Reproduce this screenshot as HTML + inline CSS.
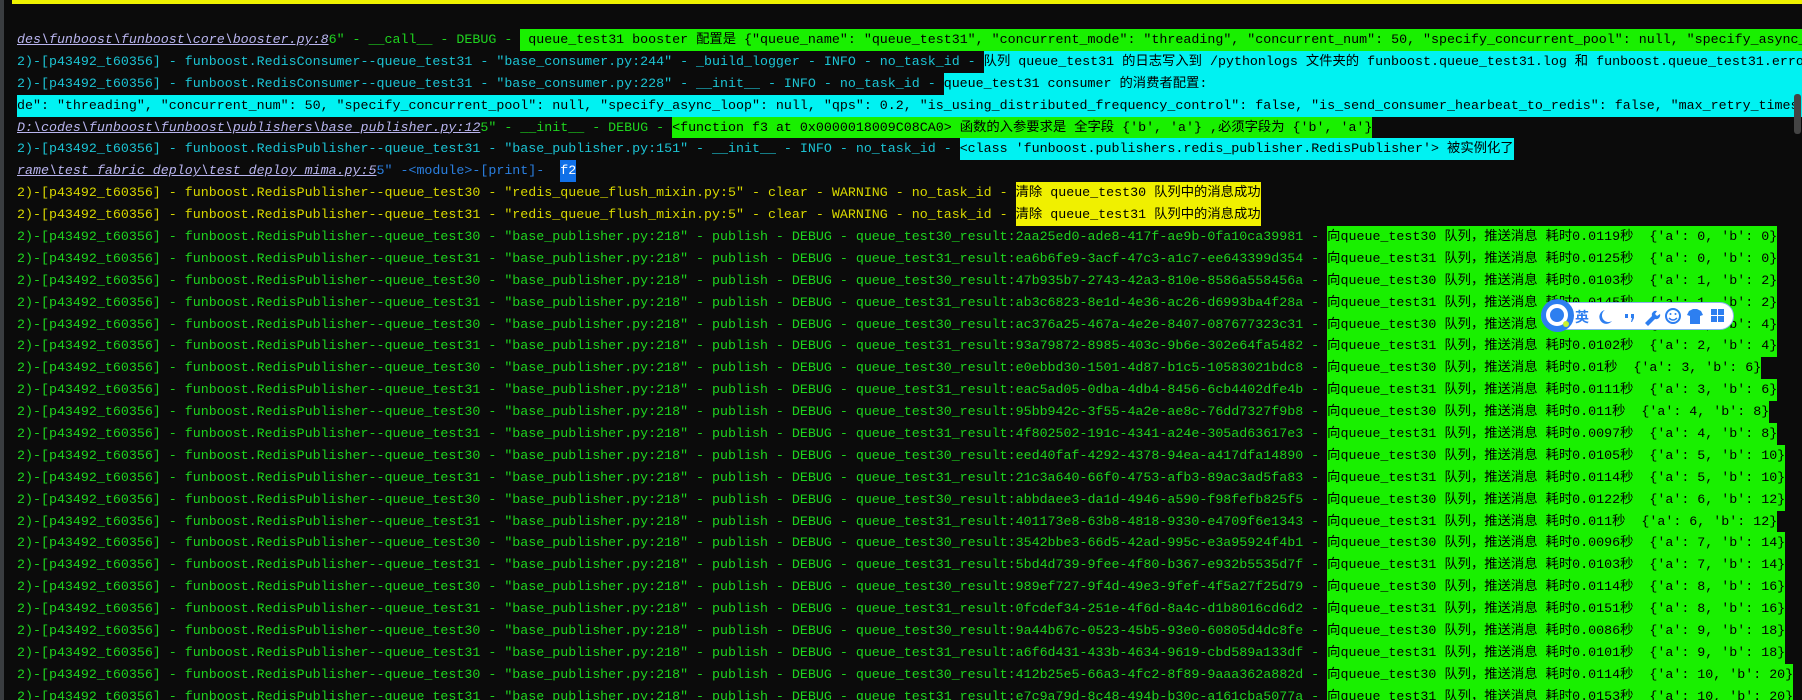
<!DOCTYPE html>
<html><head><meta charset="utf-8">
<style>
html,body{margin:0;padding:0;background:#0b0b0b;width:1802px;height:700px;overflow:hidden;position:relative}
.strip{position:absolute;left:0;top:0;width:4px;height:700px;background:#3a3d40}
.ybar{position:absolute;left:12px;top:0;width:1790px;height:4px;background:#eef200}
.log{position:absolute;left:17px;top:29px;font-family:"Liberation Mono","Noto Sans CJK SC",monospace;font-size:13.32px;line-height:21.9px}
.l{height:21.9px;white-space:pre;overflow:visible}
.l span{display:inline-block;height:21.9px;line-height:21.9px;vertical-align:top}
.g{color:#1fd41f}.c{color:#1cc4d4}.y{color:#d8d800}.b{color:#2a7fe0}
.p{color:#b8b4ee;text-decoration:underline;font-style:italic}
.gb{background:#19f000;color:#000}
.cb{background:#00f2f2;color:#000}
.yb{background:#f0f000;color:#000}
.bb{background:#1070e8;color:#fff}
.full{width:2000px}
.ime{position:absolute;left:1541px;top:302px;width:193px;height:28px;background:#fff;border:1px solid #8ab4ee;border-radius:15px;box-sizing:border-box}
.q{position:absolute;left:1541px;top:299px;width:33px;height:33px;border-radius:50%;background:#2d7ff0}
.sb{position:absolute;left:1794px;top:94px;width:7px;height:40px;background:#444;border-radius:3px}
</style></head><body>
<div class="strip"></div><div class="ybar"></div>
<div class="log"><div class="l"><span class="p">des\funboost\funboost\core\booster.py:8</span><span class="g">6" - __call__ - DEBUG - </span><span class="gb full"> queue_test31 booster 配置是 {"queue_name": "queue_test31", "concurrent_mode": "threading", "concurrent_num": 50, "specify_concurrent_pool": null, "specify_async_</span></div><div class="l"><span class="c">2)-[p43492_t60356] - funboost.RedisConsumer--queue_test31 - "base_consumer.py:244" - _build_logger - INFO - no_task_id - </span><span class="cb full">队列 queue_test31 的日志写入到 /pythonlogs 文件夹的 funboost.queue_test31.log 和 funboost.queue_test31.erro</span></div><div class="l"><span class="c">2)-[p43492_t60356] - funboost.RedisConsumer--queue_test31 - "base_consumer.py:228" - __init__ - INFO - no_task_id - </span><span class="cb full">queue_test31 consumer 的消费者配置:</span></div><div class="l"><span class="cb full">de": "threading", "concurrent_num": 50, "specify_concurrent_pool": null, "specify_async_loop": null, "qps": 0.2, "is_using_distributed_frequency_control": false, "is_send_consumer_hearbeat_to_redis": false, "max_retry_times</span></div><div class="l"><span class="p">D:\codes\funboost\funboost\publishers\base_publisher.py:12</span><span class="g">5" - __init__ - DEBUG - </span><span class="gb">&lt;function f3 at 0x0000018009C08CA0&gt; 函数的入参要求是 全字段 {'b', 'a'} ,必须字段为 {'b', 'a'}</span></div><div class="l"><span class="c">2)-[p43492_t60356] - funboost.RedisPublisher--queue_test31 - "base_publisher.py:151" - __init__ - INFO - no_task_id - </span><span class="cb">&lt;class 'funboost.publishers.redis_publisher.RedisPublisher'&gt; 被实例化了</span></div><div class="l"><span class="p">rame\test_fabric_deploy\test_deploy_mima.py:5</span><span class="b">5" -&lt;module&gt;-[print]-  </span><span class="bb">f2</span></div><div class="l"><span class="y">2)-[p43492_t60356] - funboost.RedisPublisher--queue_test30 - "redis_queue_flush_mixin.py:5" - clear - WARNING - no_task_id - </span><span class="yb">清除 queue_test30 队列中的消息成功</span></div><div class="l"><span class="y">2)-[p43492_t60356] - funboost.RedisPublisher--queue_test31 - "redis_queue_flush_mixin.py:5" - clear - WARNING - no_task_id - </span><span class="yb">清除 queue_test31 队列中的消息成功</span></div><div class="l"><span class="g">2)-[p43492_t60356] - funboost.RedisPublisher--queue_test30 - "base_publisher.py:218" - publish - DEBUG - queue_test30_result:2aa25ed0-ade8-417f-ae9b-0fa10ca39981 - </span><span class="gb">向queue_test30 队列，推送消息 耗时0.0119秒  {'a': 0, 'b': 0}</span></div><div class="l"><span class="g">2)-[p43492_t60356] - funboost.RedisPublisher--queue_test31 - "base_publisher.py:218" - publish - DEBUG - queue_test31_result:ea6b6fe9-3acf-47c3-a1c7-ee643399d354 - </span><span class="gb">向queue_test31 队列，推送消息 耗时0.0125秒  {'a': 0, 'b': 0}</span></div><div class="l"><span class="g">2)-[p43492_t60356] - funboost.RedisPublisher--queue_test30 - "base_publisher.py:218" - publish - DEBUG - queue_test30_result:47b935b7-2743-42a3-810e-8586a558456a - </span><span class="gb">向queue_test30 队列，推送消息 耗时0.0103秒  {'a': 1, 'b': 2}</span></div><div class="l"><span class="g">2)-[p43492_t60356] - funboost.RedisPublisher--queue_test31 - "base_publisher.py:218" - publish - DEBUG - queue_test31_result:ab3c6823-8e1d-4e36-ac26-d6993ba4f28a - </span><span class="gb">向queue_test31 队列，推送消息 耗时0.0145秒  {'a': 1, 'b': 2}</span></div><div class="l"><span class="g">2)-[p43492_t60356] - funboost.RedisPublisher--queue_test30 - "base_publisher.py:218" - publish - DEBUG - queue_test30_result:ac376a25-467a-4e2e-8407-087677323c31 - </span><span class="gb">向queue_test30 队列，推送消息 耗时0.0112秒  {'a': 2, 'b': 4}</span></div><div class="l"><span class="g">2)-[p43492_t60356] - funboost.RedisPublisher--queue_test31 - "base_publisher.py:218" - publish - DEBUG - queue_test31_result:93a79872-8985-403c-9b6e-302e64fa5482 - </span><span class="gb">向queue_test31 队列，推送消息 耗时0.0102秒  {'a': 2, 'b': 4}</span></div><div class="l"><span class="g">2)-[p43492_t60356] - funboost.RedisPublisher--queue_test30 - "base_publisher.py:218" - publish - DEBUG - queue_test30_result:e0ebbd30-1501-4d87-b1c5-10583021bdc8 - </span><span class="gb">向queue_test30 队列，推送消息 耗时0.01秒  {'a': 3, 'b': 6}</span></div><div class="l"><span class="g">2)-[p43492_t60356] - funboost.RedisPublisher--queue_test31 - "base_publisher.py:218" - publish - DEBUG - queue_test31_result:eac5ad05-0dba-4db4-8456-6cb4402dfe4b - </span><span class="gb">向queue_test31 队列，推送消息 耗时0.0111秒  {'a': 3, 'b': 6}</span></div><div class="l"><span class="g">2)-[p43492_t60356] - funboost.RedisPublisher--queue_test30 - "base_publisher.py:218" - publish - DEBUG - queue_test30_result:95bb942c-3f55-4a2e-ae8c-76dd7327f9b8 - </span><span class="gb">向queue_test30 队列，推送消息 耗时0.011秒  {'a': 4, 'b': 8}</span></div><div class="l"><span class="g">2)-[p43492_t60356] - funboost.RedisPublisher--queue_test31 - "base_publisher.py:218" - publish - DEBUG - queue_test31_result:4f802502-191c-4341-a24e-305ad63617e3 - </span><span class="gb">向queue_test31 队列，推送消息 耗时0.0097秒  {'a': 4, 'b': 8}</span></div><div class="l"><span class="g">2)-[p43492_t60356] - funboost.RedisPublisher--queue_test30 - "base_publisher.py:218" - publish - DEBUG - queue_test30_result:eed40faf-4292-4378-94ea-a417dfa14890 - </span><span class="gb">向queue_test30 队列，推送消息 耗时0.0105秒  {'a': 5, 'b': 10}</span></div><div class="l"><span class="g">2)-[p43492_t60356] - funboost.RedisPublisher--queue_test31 - "base_publisher.py:218" - publish - DEBUG - queue_test31_result:21c3a640-66f0-4753-afb3-89ac3ad5fa83 - </span><span class="gb">向queue_test31 队列，推送消息 耗时0.0114秒  {'a': 5, 'b': 10}</span></div><div class="l"><span class="g">2)-[p43492_t60356] - funboost.RedisPublisher--queue_test30 - "base_publisher.py:218" - publish - DEBUG - queue_test30_result:abbdaee3-da1d-4946-a590-f98fefb825f5 - </span><span class="gb">向queue_test30 队列，推送消息 耗时0.0122秒  {'a': 6, 'b': 12}</span></div><div class="l"><span class="g">2)-[p43492_t60356] - funboost.RedisPublisher--queue_test31 - "base_publisher.py:218" - publish - DEBUG - queue_test31_result:401173e8-63b8-4818-9330-e4709f6e1343 - </span><span class="gb">向queue_test31 队列，推送消息 耗时0.011秒  {'a': 6, 'b': 12}</span></div><div class="l"><span class="g">2)-[p43492_t60356] - funboost.RedisPublisher--queue_test30 - "base_publisher.py:218" - publish - DEBUG - queue_test30_result:3542bbe3-66d5-42ad-995c-e3a95924f4b1 - </span><span class="gb">向queue_test30 队列，推送消息 耗时0.0096秒  {'a': 7, 'b': 14}</span></div><div class="l"><span class="g">2)-[p43492_t60356] - funboost.RedisPublisher--queue_test31 - "base_publisher.py:218" - publish - DEBUG - queue_test31_result:5bd4d739-9fee-4f80-b367-e932b5535d7f - </span><span class="gb">向queue_test31 队列，推送消息 耗时0.0103秒  {'a': 7, 'b': 14}</span></div><div class="l"><span class="g">2)-[p43492_t60356] - funboost.RedisPublisher--queue_test30 - "base_publisher.py:218" - publish - DEBUG - queue_test30_result:989ef727-9f4d-49e3-9fef-4f5a27f25d79 - </span><span class="gb">向queue_test30 队列，推送消息 耗时0.0114秒  {'a': 8, 'b': 16}</span></div><div class="l"><span class="g">2)-[p43492_t60356] - funboost.RedisPublisher--queue_test31 - "base_publisher.py:218" - publish - DEBUG - queue_test31_result:0fcdef34-251e-4f6d-8a4c-d1b8016cd6d2 - </span><span class="gb">向queue_test31 队列，推送消息 耗时0.0151秒  {'a': 8, 'b': 16}</span></div><div class="l"><span class="g">2)-[p43492_t60356] - funboost.RedisPublisher--queue_test30 - "base_publisher.py:218" - publish - DEBUG - queue_test30_result:9a44b67c-0523-45b5-93e0-60805d4dc8fe - </span><span class="gb">向queue_test30 队列，推送消息 耗时0.0086秒  {'a': 9, 'b': 18}</span></div><div class="l"><span class="g">2)-[p43492_t60356] - funboost.RedisPublisher--queue_test31 - "base_publisher.py:218" - publish - DEBUG - queue_test31_result:a6f6d431-433b-4634-9619-cbd589a133df - </span><span class="gb">向queue_test31 队列，推送消息 耗时0.0101秒  {'a': 9, 'b': 18}</span></div><div class="l"><span class="g">2)-[p43492_t60356] - funboost.RedisPublisher--queue_test30 - "base_publisher.py:218" - publish - DEBUG - queue_test30_result:412b25e5-66a3-4fc2-8f89-9aaa362a882d - </span><span class="gb">向queue_test30 队列，推送消息 耗时0.0114秒  {'a': 10, 'b': 20}</span></div><div class="l"><span class="g">2)-[p43492_t60356] - funboost.RedisPublisher--queue_test31 - "base_publisher.py:218" - publish - DEBUG - queue_test31_result:e7c9a79d-8c48-494b-b30c-a161cba5077a - </span><span class="gb">向queue_test31 队列，推送消息 耗时0.0153秒  {'a': 10, 'b': 20}</span></div></div>
<div class="sb"></div>
<div class="ime"><svg width="193" height="28" style="position:absolute;left:-1px;top:-1px">
<text x="34" y="20" font-family="Noto Sans CJK SC,sans-serif" font-size="14" fill="#2d7ff0" font-weight="bold">英</text>
<path d="M64 8 a7 7 0 1 0 7 11 a6 6 0 0 1 -7 -11z" fill="#2d7ff0"/>
<rect x="84" y="12" width="3" height="4" fill="#2d7ff0"/><path d="M90 12 h3 v4 l-2 4 h-1 l1-4 h-1z" fill="#2d7ff0"/>
<path d="M104 21 l7-7 a4 4 0 0 1 5-5 l-2 3 2 2 3-2 a4 4 0 0 1 -5 5 l-7 7z" fill="#2d7ff0"/>
<circle cx="132" cy="14" r="7" fill="none" stroke="#2d7ff0" stroke-width="2"/><circle cx="129.5" cy="12" r="1" fill="#2d7ff0"/><circle cx="134.5" cy="12" r="1" fill="#2d7ff0"/><path d="M128 16 q4 4 8 0" stroke="#2d7ff0" fill="none" stroke-width="1.5"/>
<path d="M148 9 l4-2 h4 l4 2 2 4 -3 1 v8 h-10 v-8 l-3-1z" fill="#2d7ff0"/>
<rect x="170" y="7" width="6" height="6" fill="#2d7ff0"/><rect x="177" y="7" width="6" height="6" fill="#2d7ff0"/><rect x="170" y="14" width="6" height="6" fill="#2d7ff0"/><rect x="177" y="14" width="6" height="6" fill="#2d7ff0"/>
</svg></div>
<div class="q"><svg width="33" height="33"><circle cx="16" cy="16" r="9" fill="none" stroke="#fff" stroke-width="4"/><circle cx="25" cy="25" r="3" fill="#c8f030"/></svg></div>
</body></html>
